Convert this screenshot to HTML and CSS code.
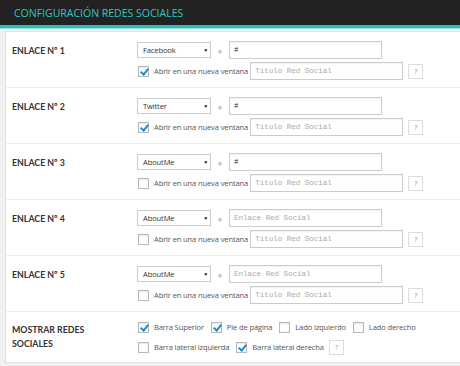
FILE: index.html
```html
<!DOCTYPE html>
<html lang="es">
<head>
  <meta charset="UTF-8" />
  <title>Configuración Redes Sociales</title>
  <link rel="stylesheet" href="styles.css">
</head>
<body>

  <div class="header">
    <h2>Configuración Redes Sociales</h2>
  </div>

  <div class="panel">
    <div class="row">
      <div class="label">ENLACE Nº 1</div>
      <div class="fields">
        <div class="line">
          <div class="select"><span>Facebook</span><i>&#9660;</i></div>
          <span class="raquo">&raquo;</span>
          <input class="url" type="text" value="#" placeholder="Enlace Red Social">
        </div>
        <div class="line">
          <label class="check"><span class="box on"></span>Abrir en una nueva ventana</label>
          <input class="title" type="text" placeholder="Título Red Social">
          <span class="help">?</span>
        </div>
      </div>
    </div>

    <div class="row">
      <div class="label">ENLACE Nº 2</div>
      <div class="fields">
        <div class="line">
          <div class="select"><span>Twitter</span><i>&#9660;</i></div>
          <span class="raquo">&raquo;</span>
          <input class="url" type="text" value="#" placeholder="Enlace Red Social">
        </div>
        <div class="line">
          <label class="check"><span class="box on"></span>Abrir en una nueva ventana</label>
          <input class="title" type="text" placeholder="Título Red Social">
          <span class="help">?</span>
        </div>
      </div>
    </div>

    <div class="row">
      <div class="label">ENLACE Nº 3</div>
      <div class="fields">
        <div class="line">
          <div class="select"><span>AboutMe</span><i>&#9660;</i></div>
          <span class="raquo">&raquo;</span>
          <input class="url" type="text" value="#" placeholder="Enlace Red Social">
        </div>
        <div class="line">
          <label class="check"><span class="box"></span>Abrir en una nueva ventana</label>
          <input class="title" type="text" placeholder="Título Red Social">
          <span class="help">?</span>
        </div>
      </div>
    </div>

    <div class="row">
      <div class="label">ENLACE Nº 4</div>
      <div class="fields">
        <div class="line">
          <div class="select"><span>AboutMe</span><i>&#9660;</i></div>
          <span class="raquo">&raquo;</span>
          <input class="url" type="text" placeholder="Enlace Red Social">
        </div>
        <div class="line">
          <label class="check"><span class="box"></span>Abrir en una nueva ventana</label>
          <input class="title" type="text" placeholder="Título Red Social">
          <span class="help">?</span>
        </div>
      </div>
    </div>

    <div class="row">
      <div class="label">ENLACE Nº 5</div>
      <div class="fields">
        <div class="line">
          <div class="select"><span>AboutMe</span><i>&#9660;</i></div>
          <span class="raquo">&raquo;</span>
          <input class="url" type="text" placeholder="Enlace Red Social">
        </div>
        <div class="line">
          <label class="check"><span class="box"></span>Abrir en una nueva ventana</label>
          <input class="title" type="text" placeholder="Título Red Social">
          <span class="help">?</span>
        </div>
      </div>
    </div>

    <div class="row last">
      <div class="label">MOSTRAR REDES<br>SOCIALES</div>
      <div class="fields show">
        <div class="line">
          <label class="check"><span class="box on"></span>Barra Superior</label>
          <label class="check"><span class="box on"></span>Pie de página</label>
          <label class="check"><span class="box"></span>Lado izquierdo</label>
          <label class="check"><span class="box"></span>Lado derecho</label>
        </div>
        <div class="line">
          <label class="check"><span class="box"></span>Barra lateral izquierda</label>
          <label class="check"><span class="box on"></span>Barra lateral derecha</label>
          <span class="help">?</span>
        </div>
      </div>
    </div>
  </div>

</body>
</html>
```

FILE: styles.css
```css
* {
  box-sizing: border-box;
}

body {
  margin: 0;
  background: #f1f1f1;
  font-family: "Open Sans", Lato, sans-serif;
  color: #444;
  font-size: 7.6px;
  letter-spacing: -0.15px;
}

.header {
  height: 28px;
  background: #222;
  border-bottom: 3px solid #2cbdb6;
  box-shadow: 0 1px 0 #8fe3e0;
  padding: 0 14px;
}

.header h2 {
  margin: 0;
  line-height: 27px;
  font-size: 10.5px;
  font-weight: 400;
  letter-spacing: 0;
  text-transform: uppercase;
  color: #35c6be;
}

.panel {
  margin: 3px 0 0 5px;
  background: #fff;
  border: 1px solid #e4e4e4;
  border-right: none;
}

.row {
  display: flex;
  height: 56px;
  border-bottom: 1px solid #eee;
  padding: 9px 0 0 6px;
}

.row.last {
  height: 50px;
  border-bottom: none;
  padding-top: 8px;
}

.label {
  width: 125px;
  padding-top: 3px;
  font-family: Lato, "Open Sans", sans-serif;
  font-size: 8.8px;
  font-weight: 700;
  letter-spacing: 0;
  line-height: 14px;
  color: #333;
}

.fields {
  display: flex;
  flex-direction: column;
  gap: 3px;
}

.line {
  display: flex;
  align-items: center;
}

.select {
  width: 74px;
  height: 16px;
  border: 1px solid #ccc;
  display: flex;
  align-items: center;
  justify-content: space-between;
  padding: 0 2px 0 5px;
  color: #333;
}

.select i {
  font-style: normal;
  font-size: 5px;
  color: #111;
}

.raquo {
  width: 18px;
  text-align: center;
  color: #999;
  font-size: 9px;
}

input {
  height: 18px;
  border: 1px solid #ccc;
  padding: 0 4px;
  font-family: "Liberation Mono", monospace;
  font-size: 7.5px;
  letter-spacing: 0;
  color: #333;
  outline: none;
  box-shadow: inset 0 1px 1px rgba(0,0,0,0.05);
}

input::placeholder {
  color: #aaa;
}

.url {
  width: 153px;
}

.title {
  width: 153px;
  margin-left: 2px;
}

.check {
  display: flex;
  align-items: center;
  color: #555;
  white-space: nowrap;
  margin-right: 6px;
}

.line .check:has(+ .title),
.line .check:has(+ .help) {
  margin-right: 0;
}

.box {
  width: 11px;
  height: 11px;
  border: 1px solid #b4b9be;
  background: #fff;
  margin: 0 5px 0 1px;
  position: relative;
  box-shadow: inset 0 1px 2px rgba(0,0,0,0.1);
}

.box.on::after {
  content: "";
  position: absolute;
  left: 3px;
  top: 0px;
  width: 3px;
  height: 6px;
  border: solid #1e8cbe;
  border-width: 0 2px 2px 0;
  transform: rotate(40deg);
}

.help {
  width: 15px;
  height: 15px;
  margin-left: 5px;
  border: 1px solid #ddd;
  display: flex;
  align-items: center;
  justify-content: center;
  color: #999;
  font-size: 7px;
}

.show .line {
  height: 14px;
}

.show .line + .line {
  margin-top: 3px;
}
```
